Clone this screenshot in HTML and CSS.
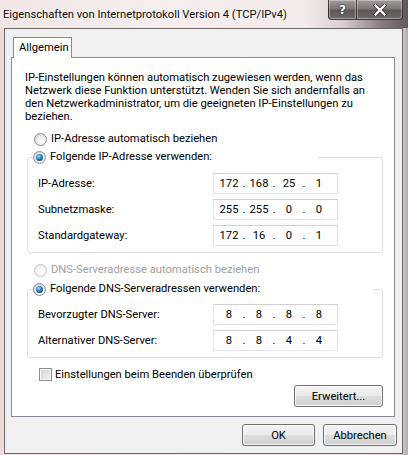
FILE: index.html
```html
<!DOCTYPE html>
<html lang="de">
<head>
<meta charset="utf-8">
<title>Eigenschaften von Internetprotokoll Version 4 (TCP/IPv4)</title>
<link rel="stylesheet" href="styles.css">
</head>
<body>
<div class="window">
  <div class="titlebar">
    <div class="title">Eigenschaften von Internetprotokoll Version 4 (TCP/IPv4)</div>
    <div class="caption-buttons">
      <div class="cbtn help">?</div>
      <div class="cbtn close">
        <svg width="14" height="12" viewBox="0 0 14 12"><path d="M2.5 1.5 L11.5 10.5 M11.5 1.5 L2.5 10.5" stroke="#2a2525" stroke-width="3.8" stroke-linecap="square"/><path d="M2.5 1.5 L11.5 10.5 M11.5 1.5 L2.5 10.5" stroke="#ffffff" stroke-width="2.4" stroke-linecap="square"/></svg>
      </div>
    </div>
  </div>
  <div class="client">
    <div class="tabs"><div class="tab">Allgemein</div></div>
    <div class="panel">
      <p class="intro">IP-Einstellungen können automatisch zugewiesen werden, wenn das<br>Netzwerk diese Funktion unterstützt. Wenden Sie sich andernfalls an<br>den Netzwerkadministrator, um die geeigneten IP-Einstellungen zu<br>beziehen.</p>
      <div class="radio first"><span class="rb"></span>IP-Adresse automatisch beziehen</div>
      <fieldset class="group g1">
        <legend class="radio head"><span class="rb on"></span>Folgende IP-Adresse verwenden:</legend>
        <div class="row"><span class="lbl">IP-Adresse:</span><div class="ipbox"><span class="oct">172</span><span class="dot">.</span><span class="oct">168</span><span class="dot">.</span><span class="oct">25</span><span class="dot">.</span><span class="oct">1</span></div></div>
        <div class="row"><span class="lbl">Subnetzmaske:</span><div class="ipbox"><span class="oct">255</span><span class="dot">.</span><span class="oct">255</span><span class="dot">.</span><span class="oct">0</span><span class="dot">.</span><span class="oct">0</span></div></div>
        <div class="row"><span class="lbl">Standardgateway:</span><div class="ipbox"><span class="oct">172</span><span class="dot">.</span><span class="oct">16</span><span class="dot">.</span><span class="oct">0</span><span class="dot">.</span><span class="oct">1</span></div></div>
      </fieldset>
      <div class="radio disabled"><span class="rb"></span>DNS-Serveradresse automatisch beziehen</div>
      <fieldset class="group g2">
        <legend class="radio head wide"><span class="rb on"></span>Folgende DNS-Serveradressen verwenden:</legend>
        <div class="row"><span class="lbl">Bevorzugter DNS-Server:</span><div class="ipbox"><span class="oct">8</span><span class="dot">.</span><span class="oct">8</span><span class="dot">.</span><span class="oct">8</span><span class="dot">.</span><span class="oct">8</span></div></div>
        <div class="row"><span class="lbl">Alternativer DNS-Server:</span><div class="ipbox"><span class="oct">8</span><span class="dot">.</span><span class="oct">8</span><span class="dot">.</span><span class="oct">4</span><span class="dot">.</span><span class="oct">4</span></div></div>
      </fieldset>
      <div class="check"><span class="cb"></span>Einstellungen beim Beenden überprüfen</div>
      <div class="adv-row"><button class="btn adv">Erweitert...</button></div>
    </div>
    <div class="footer"><button class="btn ok">OK</button><button class="btn cancel">Abbrechen</button></div>
  </div>
</div>
</body>
</html>
```

FILE: styles.css
```css
* { box-sizing: border-box; }

html, body {
  margin: 0;
  padding: 0;
}

body {
  width: 408px;
  height: 455px;
  overflow: hidden;
  font-family: Roboto, "Open Sans", sans-serif;
  font-size: 11.2px;
  color: #000;
}

.window {
  width: 408px;
  height: 455px;
  display: flex;
  flex-direction: column;
  background: linear-gradient(90deg, #eed6d6 0%, #f3e3e3 2%, #f4eaea 50%, #f0e2e2 97%, #b9a9a9 100%);
}

.titlebar {
  height: 28px;
  display: flex;
  align-items: flex-start;
  background: linear-gradient(90deg, #f1e6e6 0%, #f6eeee 40%, #f3eaea 75%, #d9cfcf 84%, #8b8282 93%, #5f5858 100%);
}

.title {
  padding-left: 3px;
  line-height: 30px;
  font-size: 11.2px;
  color: #0c0c0c;
  white-space: nowrap;
  text-shadow: 0 0 6px rgba(255,255,255,0.9);
}

.caption-buttons {
  margin-left: auto;
  margin-right: 5px;
  display: flex;
  height: 20px;
}

.cbtn {
  height: 20px;
  display: flex;
  align-items: center;
  justify-content: center;
  border: 1px solid rgba(40, 30, 30, 0.75);
  border-top: none;
  box-shadow: inset 0 0 0 1px rgba(255,255,255,0.35);
  background: linear-gradient(#a39b9a 0%, #7f7776 45%, #5f5857 55%, #6f6867 100%);
  color: #fff;
  font-family: "DejaVu Sans", sans-serif;
  font-weight: bold;
  font-size: 12px;
  text-shadow: 0 0 2px #201818, 0 0 1px #201818;
}

.cbtn.help {
  width: 28px;
  border-radius: 0 0 0 4px;
  border-right: none;
}

.cbtn.close {
  width: 47px;
  border-radius: 0 0 4px 0;
}

.client {
  flex: 1;
  margin: 0 5px 1px 4px;
  border: 1px solid #6c6666;
  background: #f0f0f0;
  padding: 8px 7px 0 6px;
  display: flex;
  flex-direction: column;
}

.tabs {
  height: 20px;
  display: flex;
}

.tab {
  margin-left: 2px;
  width: 59px;
  height: 21px;
  margin-bottom: -1px;
  position: relative;
  z-index: 1;
  background: #fff;
  border: 1px solid #898c95;
  border-bottom: none;
  padding-left: 5px;
  line-height: 19px;
}

.panel {
  background: #fff;
  border: 1px solid #898c95;
  padding: 13px 11px 9px 13px;
  display: flex;
  flex-direction: column;
}

.intro {
  margin: 0;
  line-height: 13px;
  white-space: nowrap;
}

.radio {
  display: flex;
  align-items: center;
  height: 16px;
  line-height: 16px;
  white-space: nowrap;
}

.radio.first {
  margin-top: 8px;
  margin-left: 9px;
}

.rb {
  width: 13px;
  height: 13px;
  border-radius: 50%;
  border: 1px solid #8b8d8f;
  background: radial-gradient(circle at 60% 65%, #ffffff 0%, #f2f2f2 35%, #c9cacb 100%);
  margin-right: 4px;
  position: relative;
  flex: none;
}

.rb.on::after {
  content: "";
  position: absolute;
  left: 2px;
  top: 2px;
  width: 7px;
  height: 7px;
  border-radius: 50%;
  background: radial-gradient(circle at 40% 35%, #9fe0ff 0%, #3a93d0 35%, #154f86 70%, #0c2b4e 100%);
}

.radio.disabled {
  margin-top: 9px;
  margin-left: 9px;
  color: #a0a0a0;
}

.radio.disabled .rb {
  border-color: #c5c5c5;
  background: radial-gradient(circle at 60% 65%, #ffffff 0%, #f6f6f6 40%, #e2e2e2 100%);
}

.group {
  margin: 2px 0 0 2px;
  padding: 1px 0 6px 10px;
  border: 1px solid #dcdfe3;
  border-radius: 3px;
  min-width: 0;
}

.group.g2 {
  margin-top: 3px;
}

legend.head {
  padding: 0;
  margin: 0 0 7px -5px;
  width: 285px;
}

.g2 legend.head {
  margin-bottom: 6px;
}

legend.head.wide {
  width: 340px;
}

.row {
  display: grid;
  grid-template-columns: 175px 125px;
  align-items: center;
  height: 21px;
}

.row + .row {
  margin-top: 5px;
}

.ipbox {
  height: 21px;
  display: flex;
  align-items: center;
  padding-left: 3px;
  background: #fff;
  border: 1px solid #e2e3ea;
  border-top-color: #cfd1d6;
}

.oct {
  width: 24px;
  text-align: center;
}

.dot {
  width: 6px;
  text-align: center;
}

.check {
  display: flex;
  align-items: center;
  height: 16px;
  margin-top: 8px;
  margin-left: 14px;
  white-space: nowrap;
}

.cb {
  width: 13px;
  height: 13px;
  border: 1px solid #8f8f8f;
  background: linear-gradient(135deg, #d2d2d2 0%, #e6e6e6 60%, #f2f2f2 100%);
  box-shadow: inset 0 0 0 1px #f4f4f4;
  margin-right: 3px;
  flex: none;
}

.adv-row {
  display: flex;
  justify-content: flex-end;
  margin-top: 3px;
}

.btn {
  font-family: inherit;
  font-size: 11.2px;
  color: #000;
  height: 22px;
  padding: 0;
  border: 1px solid #707070;
  border-radius: 3px;
  background: linear-gradient(#f3f3f3 0%, #ebebeb 48%, #dddddd 52%, #cfcfcf 100%);
  box-shadow: inset 0 0 0 1px rgba(255,255,255,0.8);
}

.btn.adv {
  width: 89px;
}

.footer {
  display: flex;
  justify-content: flex-end;
  gap: 8px;
  padding-top: 7px;
  margin-right: -2px;
}

.btn.ok {
  width: 73px;
}

.btn.cancel {
  width: 74px;
}
```
